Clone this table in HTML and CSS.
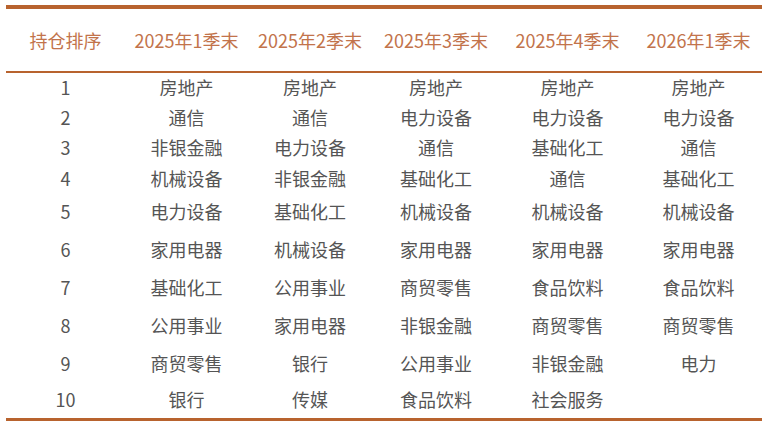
FILE: index.html
```html
<!DOCTYPE html>
<html lang="zh">
<head>
<meta charset="utf-8">
<link rel="stylesheet" href="styles.css">
</head>
<body>
<table class="rank">
  <colgroup>
    <col class="c0"><col class="c1"><col class="c2"><col class="c3"><col class="c4"><col class="c5">
  </colgroup>
  <thead>
    <tr><th>持仓排序</th><th>2025年1季末</th><th>2025年2季末</th><th>2025年3季末</th><th>2025年4季末</th><th>2026年1季末</th></tr>
  </thead>
  <tbody>
    <tr class="s"><td>1</td><td>房地产</td><td>房地产</td><td>房地产</td><td>房地产</td><td>房地产</td></tr>
    <tr class="s"><td>2</td><td>通信</td><td>通信</td><td>电力设备</td><td>电力设备</td><td>电力设备</td></tr>
    <tr class="s3"><td>3</td><td>非银金融</td><td>电力设备</td><td>通信</td><td>基础化工</td><td>通信</td></tr>
    <tr class="s"><td>4</td><td>机械设备</td><td>非银金融</td><td>基础化工</td><td>通信</td><td>基础化工</td></tr>
    <tr class="m"><td>5</td><td>电力设备</td><td>基础化工</td><td>机械设备</td><td>机械设备</td><td>机械设备</td></tr>
    <tr class="l"><td>6</td><td>家用电器</td><td>机械设备</td><td>家用电器</td><td>家用电器</td><td>家用电器</td></tr>
    <tr class="l"><td>7</td><td>基础化工</td><td>公用事业</td><td>商贸零售</td><td>食品饮料</td><td>食品饮料</td></tr>
    <tr class="l"><td>8</td><td>公用事业</td><td>家用电器</td><td>非银金融</td><td>商贸零售</td><td>商贸零售</td></tr>
    <tr class="l"><td>9</td><td>商贸零售</td><td>银行</td><td>公用事业</td><td>非银金融</td><td>电力</td></tr>
    <tr class="last"><td>10</td><td>银行</td><td>传媒</td><td>食品饮料</td><td>社会服务</td><td></td></tr>
  </tbody>
</table>
</body>
</html>
```
FILE: styles.css
```css
html, body {
  margin: 0;
  padding: 0;
  background: #ffffff;
}
body {
  padding: 5px 0 0 6px;
  font-family: "Noto Sans CJK SC", "Noto Sans", sans-serif;
}
.rank {
  border-collapse: collapse;
  width: 756px;
  table-layout: fixed;
  border-top: 4px solid #b8632e;
  border-bottom: 3px solid #b8632e;
}
.c0 { width: 119px; }
.c1 { width: 123px; }
.c2 { width: 124px; }
.c3 { width: 128px; }
.c4 { width: 135px; }
.c5 { width: 127px; }
.rank th {
  height: 62px;
  padding: 0;
  font-size: 18px;
  font-weight: normal;
  color: #c2734b;
  text-align: center;
  border-bottom: 2px solid #b8632e;
  white-space: nowrap;
}
.rank td {
  padding: 0 0 3px 0;
  font-size: 18px;
  color: #555555;
  text-align: center;
  white-space: nowrap;
  line-height: 20px;
}
.rank tr.s td { height: 27px; }
.rank tr.s3 td { height: 28px; }
.rank tr.m td { height: 34px; }
.rank tr.l td { height: 35px; }
.rank tr.last td { height: 32px; }
```
